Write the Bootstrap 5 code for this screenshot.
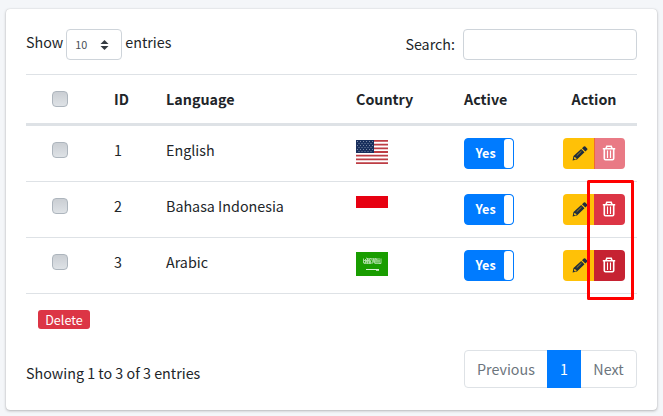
<!DOCTYPE html>
<html lang="en">
<head>
<meta charset="utf-8">
<meta name="viewport" content="width=device-width, initial-scale=1">
<title>Languages</title>
<link href="https://cdn.jsdelivr.net/npm/bootstrap@5.3.0/dist/css/bootstrap.min.css" rel="stylesheet">
<style>
body{background:#f4f6f9;color:#212529;font-family:"Noto Sans CJK SC","Open Sans",sans-serif;font-size:14.3px;line-height:24px;height:416px;overflow:hidden}
.panel{width:651px;height:401px;margin:9px 0 0 6px;border:0;border-radius:4px;box-shadow:0 0 1px rgba(0,0,0,.2),0 1px 3px rgba(0,0,0,.25);padding:20px 20px 0}
.toolbar{height:31px}
.length-text{padding-bottom:5px}
.search-text{padding-bottom:2px}
.length-box{width:56px;height:31px;border:1px solid #ced4da;border-radius:4px;padding:0 12px 2px 8px;font-size:10.8px;color:#495057;margin:0 3px 0 3px}
.length-box svg{margin-top:2px}
.search-box{width:174px;height:31px;min-height:0;border:1px solid #ced4da;border-radius:4px;margin-left:8px;padding:0 8px}
.lang-table{table-layout:fixed;width:611px;margin:14px 0 0;border-collapse:separate;border-spacing:0;border-top:1px solid #dee2e6;color:#212529}
.lang-table th,.lang-table td{padding:0 12px;border-bottom:1px solid #dee2e6;vertical-align:middle;background:none;box-shadow:none}
.lang-table th{height:51px;border-bottom:3px solid #dee2e6;font-weight:700}
.lang-table td{height:56px}
.lang-table td.cell-text{padding-bottom:7px}
.lang-table tr.foot-row td{border:0;height:51px}
.tick{display:block;width:16px;height:16px;margin:0 0 7px 14px;border:1px solid #adb5bd;border-radius:4px;background:linear-gradient(#caced3,#dee2e6)}
.tick-head{margin-bottom:0}
.flag{display:block;margin-bottom:3px}
.switch-yes{width:50px;height:31px;border:1px solid #007bff;border-radius:4px;background:#007bff;color:#fff;font-weight:700;font-size:12.6px;overflow:hidden}
.switch-yes span{width:40px;padding:0 0 2px 2px}
.switch-yes i{width:9px;background:#fff;border-radius:3px}
.tool{width:31px;height:31px;padding:0;border:0;border-radius:0;display:flex;align-items:center;justify-content:center}
.tool-edit{background:#ffc107;border-radius:4px 0 0 4px;padding:0 0 1px 2px}
.tool-del{background:#dc3545;border-radius:0 4px 4px 0;padding:0 1px 1px 0}
.tool-del.faded{background:#e97a85;box-shadow:inset 1px 0 #ee6a35}
.tool-del.pressed{background:#c62232}
.btn-delete{width:52px;height:19px;padding:0;border:0;border-radius:3px;background:#dc3545;color:#fff;font-size:12.6px;line-height:19px}
.pager{height:38px}
.pager .page-link{height:38px;padding:0;line-height:36px;font-size:14.3px;border-color:#dee2e6;color:#6c757d;text-align:center}
.pager .page-item:first-child .page-link{width:84px;border-radius:4px 0 0 4px}
.pager .page-item:last-child .page-link{width:57px;border-radius:0 4px 4px 0}
.pager .active .page-link{width:34px;background:#007bff;border-color:#007bff;color:#fff}
.table-footer{padding-top:5px}
.info-text{padding-top:11px}
.marker{left:587px;top:180px;width:47px;height:120px;border:3px solid #f00;border-radius:1.5px}
</style>
<script src="https://cdn.jsdelivr.net/npm/bootstrap@5.3.0/dist/js/bootstrap.bundle.min.js"></script>
</head>
<body class="position-relative">
<svg width="0" height="0" class="position-absolute">
  <symbol id="pencil" viewBox="0 0 16 16"><path fill="#1f2d3d" d="M.6 15.400l.9-4.400L9.200 4l3.300 3.200-7.500 7.200zM10 3.200L11.800 1.500q.8-.7 1.500 0l1.900 1.900q.7.700 0 1.400l-1.800 1.600z"/><path stroke="#ffc107" stroke-width=".6" d="M4.700 10.700l4.800-4.600" fill="none"/><path fill="#ffc107" d="M2.300 12l1.200.3.200 1 1 .3-.2.500-1.500.4-1-1z"/></symbol>
  <symbol id="trash" viewBox="0 0 14 16"><path fill="none" stroke="#fff" stroke-width="1.600" d="M.8 3.700h12.400M4 3.500l.8-2.200h4.400l.8 2.200M2.300 3.700v9.800q0 1.200 1.200 1.200h7q1.200 0 1.200-1.200v-9.800"/><path stroke="#fff" stroke-width="1.100" d="M5.500 5.500v7.500M8.500 5.500v7.500"/></symbol>
</svg>
<div class="card panel">
  <div class="toolbar d-flex justify-content-between align-items-center">
    <div class="d-flex align-items-center"><span class="length-text">Show</span>
      <div class="length-box d-flex align-items-center justify-content-between"><span>10</span>
        <svg width="9" height="10" viewBox="0 0 9 10"><path fill="#343a40" d="M4.500 0L8.500 4h-8zM4.500 10L.5 6h8z"/></svg></div>
      <span class="length-text">entries</span></div>
    <label class="d-flex align-items-center"><span class="search-text">Search:</span><input class="form-control search-box" type="text"></label>
  </div>
  <table class="table lang-table">
    <colgroup><col width="76"><col width="52"><col width="190"><col width="108"><col width="99"><col width="86"></colgroup>
    <thead><tr><th><span class="tick tick-head"></span></th><th>ID</th><th>Language</th><th>Country</th><th>Active</th><th class="text-center">Action</th></tr></thead>
    <tbody>
      <tr><td><span class="tick"></span></td><td class="cell-text">1</td><td class="cell-text">English</td>
        <td><svg class="flag" width="32" height="24" viewBox="0 0 32 24"><path fill="#fff" d="M0 0h32v24H0z"/><path stroke="#bd3d44" stroke-width="1.850" d="M0 .92h32M0 4.620h32M0 8.310h32M0 12h32M0 15.690h32M0 19.380h32M0 23.080h32"/><path fill="#192f5d" d="M0 0h18v13H0z"/><path stroke="#8492ad" stroke-width=".9" stroke-dasharray="1 2" d="M1 1.500h16M2.500 3.500h14M1 5.500h16M2.500 7.500h14M1 9.500h16M2.500 11.500h14"/></svg></td>
        <td><div class="switch-yes d-flex"><span class="d-flex align-items-center justify-content-center">Yes</span><i></i></div></td>
        <td><div class="d-flex"><button class="btn tool tool-edit"><svg width="16" height="16"><use href="#pencil"/></svg></button><button class="btn tool tool-del faded"><svg width="14" height="16"><use href="#trash"/></svg></button></div></td></tr>
      <tr><td><span class="tick"></span></td><td class="cell-text">2</td><td class="cell-text">Bahasa Indonesia</td>
        <td><svg class="flag" width="32" height="24"><path fill="#fff" d="M0 0h32v24H0z"/><path fill="#e70011" d="M0 0h32v12H0z"/></svg></td>
        <td><div class="switch-yes d-flex"><span class="d-flex align-items-center justify-content-center">Yes</span><i></i></div></td>
        <td><div class="d-flex"><button class="btn tool tool-edit"><svg width="16" height="16"><use href="#pencil"/></svg></button><button class="btn tool tool-del"><svg width="14" height="16"><use href="#trash"/></svg></button></div></td></tr>
      <tr><td><span class="tick"></span></td><td class="cell-text">3</td><td class="cell-text">Arabic</td>
        <td><svg class="flag" width="32" height="24"><path fill="#199d00" d="M0 0h32v24H0z"/><path fill="none" stroke="#b4e0ac" stroke-width=".9" d="M7.500 6.500v4.500h2V7l2 4.500V6l2 5.500V6.500h2L14 11h3V6l2 5.500V6.500l2 1v4M23 6v5.500h2V6.500M8 8.500h5M16 9h8M10 6l3 1M18 7h4M8 11.300h7M19 11.300h6"/><path stroke="#d8f0d4" stroke-width="1" d="M10 17.500h13M20 18.300h3"/></svg></td>
        <td><div class="switch-yes d-flex"><span class="d-flex align-items-center justify-content-center">Yes</span><i></i></div></td>
        <td><div class="d-flex"><button class="btn tool tool-edit"><svg width="16" height="16"><use href="#pencil"/></svg></button><button class="btn tool tool-del pressed"><svg width="14" height="16"><use href="#trash"/></svg></button></div></td></tr>
      <tr class="foot-row"><td colspan="6"><button class="btn btn-delete d-block">Delete</button></td></tr>
    </tbody>
  </table>
  <div class="table-footer d-flex justify-content-between">
    <div class="info-text">Showing 1 to 3 of 3 entries</div>
    <ul class="pagination pager mb-0">
      <li class="page-item"><a class="page-link">Previous</a></li>
      <li class="page-item active"><a class="page-link">1</a></li>
      <li class="page-item"><a class="page-link">Next</a></li>
    </ul>
  </div>
</div>
<div class="marker position-absolute"></div>
</body>
</html>
